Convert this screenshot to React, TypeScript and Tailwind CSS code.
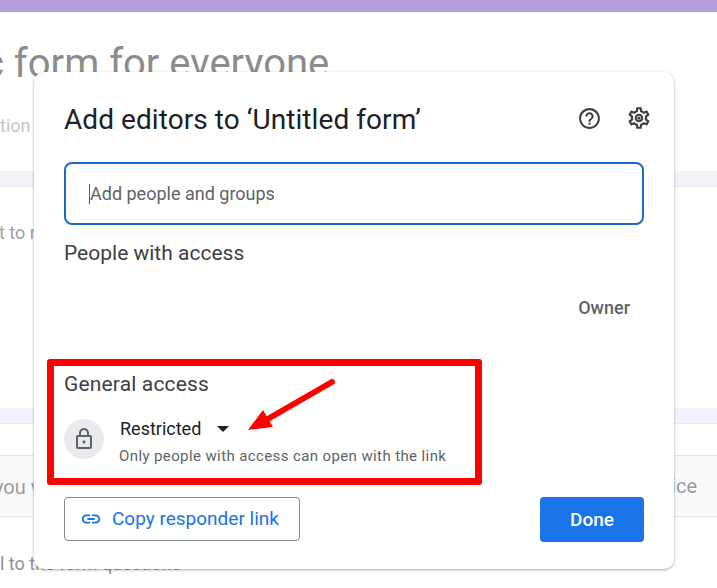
import React from 'react';

const Icon = ({ d, className }: { d: string; className: string }) => (
  <svg viewBox="0 0 24 24" fill="currentColor" className={className}>
    <path d={d} />
  </svg>
);

const helpPath =
  'M11 18h2v-2h-2v2zm1-16C6.48 2 2 6.48 2 12s4.48 10 10 10 10-4.48 10-10S17.52 2 12 2zm0 18c-4.41 0-8-3.59-8-8s3.59-8 8-8 8 3.59 8 8-3.59 8-8 8zm0-14c-2.21 0-4 1.79-4 4h2c0-1.1.9-2 2-2s2 .9 2 2c0 2-3 1.75-3 5h2c0-2.25 3-2.5 3-5 0-2.21-1.79-4-4-4z';
const settingsPath =
  'M19.43 12.98c.04-.32.07-.64.07-.98 0-.34-.03-.66-.07-.98l2.11-1.65c.19-.15.24-.42.12-.64l-2-3.46c-.09-.16-.26-.25-.44-.25-.06 0-.12.01-.17.03l-2.49 1c-.52-.4-1.08-.73-1.69-.98l-.38-2.65C14.46 2.18 14.25 2 14 2h-4c-.25 0-.46.18-.49.42l-.38 2.65c-.61.25-1.17.59-1.69.98l-2.49-1c-.06-.02-.12-.03-.18-.03-.17 0-.34.09-.43.25l-2 3.46c-.13.22-.07.49.12.64l2.11 1.65c-.04.32-.07.65-.07.98 0 .33.03.66.07.98l-2.11 1.65c-.19.15-.24.42-.12.64l2 3.46c.09.16.26.25.44.25.06 0 .12-.01.17-.03l2.49-1c.52.4 1.08.73 1.69.98l.38 2.65c.03.24.24.42.49.42h4c.25 0 .46-.18.49-.42l.38-2.65c.61-.25 1.17-.59 1.69-.98l2.49 1c.06.02.12.03.18.03.17 0 .34-.09.43-.25l2-3.46c.12-.22.07-.49-.12-.64l-2.11-1.65zm-1.98-1.71c.04.31.05.52.05.73 0 .21-.02.43-.05.73l-.14 1.13.89.7 1.08.84-.7 1.21-1.27-.51-1.04-.42-.9.68c-.43.32-.84.56-1.25.73l-1.06.43-.16 1.13-.2 1.35h-1.4l-.19-1.35-.16-1.13-1.06-.43c-.43-.18-.83-.41-1.23-.71l-.91-.7-1.06.43-1.27.51-.7-1.21 1.08-.84.89-.7-.14-1.13c-.03-.31-.05-.54-.05-.74s.02-.43.05-.73l.14-1.13-.89-.7-1.08-.84.7-1.21 1.27.51 1.04.42.9-.68c.43-.32.84-.56 1.25-.73l1.06-.43.16-1.13.2-1.35h1.39l.19 1.35.16 1.13 1.06.43c.43.18.83.41 1.23.71l.91.7 1.06-.43 1.27-.51.7 1.21-1.07.85-.89.7.14 1.13zM12 8c-2.21 0-4 1.79-4 4s1.79 4 4 4 4-1.79 4-4-1.79-4-4-4zm0 6c-1.1 0-2-.9-2-2s.9-2 2-2 2 .9 2 2-.9 2-2 2zM12 10.5a1.5 1.5 0 1 0 0 3 1.5 1.5 0 0 0 0-3z';
const lockPath =
  'M18 8h-1V6c0-2.76-2.24-5-5-5S7 3.24 7 6v2H6c-1.1 0-2 .9-2 2v10c0 1.1.9 2 2 2h12c1.1 0 2-.9 2-2V10c0-1.1-.9-2-2-2zM9 6c0-1.66 1.34-3 3-3s3 1.34 3 3v2H9V6zm9 14H6V10h12v10zm-6-3.5c.83 0 1.5-.67 1.5-1.5s-.67-1.5-1.5-1.5-1.5.67-1.5 1.5.67 1.5 1.5 1.5z';
const linkPath =
  'M3.9 12c0-1.71 1.39-3.1 3.1-3.1h4V7H7c-2.76 0-5 2.24-5 5s2.24 5 5 5h4v-1.9H7c-1.71 0-3.1-1.39-3.1-3.1zM8 13h8v-2H8v2zm9-6h-4v1.9h4c1.71 0 3.1 1.39 3.1 3.1s-1.39 3.1-3.1 3.1h-4V17h4c2.76 0 5-2.24 5-5s-2.24-5-5-5z';

function BackgroundPage() {
  return (
    <div className="flex flex-col h-full text-[#9a9a9a]">
      <div className="h-3 shrink-0 bg-[#b39ddb]" />
      <div className="h-[60px] shrink-0">
        <div className="mt-[29px] -ml-[17px] text-[40px] leading-[46px] text-[#8c8c8c] whitespace-nowrap">c form for everyone</div>
      </div>
      <div className="mt-[44px] text-[18px] leading-5 text-[#c4c4c4]">tion</div>
      <div className="mt-[35px] h-4 shrink-0 bg-[#f4f2f9] border-b border-[#e8e6ee]" />
      <div className="mt-[36px] text-[18px] leading-5 text-[#9f9f9f] -ml-[1px]">t to r</div>
      <div className="mt-[165px] h-4 shrink-0 bg-[#f4f2f9] border-b border-[#e8e6ee]" />
      <div className="mt-[31px] h-[62px] shrink-0 bg-[#fafafa] border-y border-[#e6e6e6] flex items-center justify-between">
        <span className="text-[20px] -ml-[6px] mt-[1px]">you v</span>
        <span className="text-[20px] pr-[20px]">ice</span>
      </div>
      <div className="mt-[37px] text-[18px] leading-5 text-[#8f8f8f] whitespace-nowrap">l to the form questions</div>
    </div>
  );
}

function ShareDialog() {
  return (
    <div className="absolute left-[34px] top-[72px] w-[640px] h-[497px] rounded-[10px] bg-white shadow-[0_1px_3px_rgba(60,64,67,0.45)] pt-[30px] px-[30px] flex flex-col">
      <div className="flex items-center justify-between h-9">
        <h1 className="text-[28px] leading-9 tracking-[0.07px] text-[#202124]">Add editors to ‘Untitled form’</h1>
        <div className="flex items-center gap-6 mr-[-8px] text-[#3c4043]">
          <Icon d={helpPath} className="w-[25px] h-[25px] -mt-[3px]" />
          <Icon d={settingsPath} className="w-[26px] h-[26px] -mt-[5px]" />
        </div>
      </div>

      <div className="mt-[24px] h-[63px] rounded-lg border-2 border-[#1a67d2] flex items-center pl-[23px]">
        <div className="w-px h-5 bg-[#1a67d2]" />
        <span className="text-[18px] text-[#5f6368]">Add people and groups</span>
      </div>

      <div className="mt-[16px] text-[21px] leading-6 text-[#3c4043]">People with access</div>

      <div className="mt-[31px] pr-[14px] text-right text-[18px] leading-6 font-medium text-[#5f6368]">Owner</div>

      <div className="mt-[52px] text-[21px] leading-6 tracking-[0.15px] text-[#3c4043]">General access</div>

      <div className="mt-[20px] flex items-start gap-[15px]">
        <div className="mt-[3px] w-10 h-10 rounded-full bg-[#e8eaed] flex items-center justify-center text-[#5f6368]">
          <Icon d={lockPath} className="w-6 h-6" />
        </div>
        <div>
          <div className="flex items-center h-6">
            <span className="text-[18px] font-[450] text-[#202124] pl-[1px]">Restricted</span>
            <span className="ml-[16px] mt-[1px] w-0 h-0 border-x-[6.5px] border-x-transparent border-t-[6px] border-t-[#202124]" />
          </div>
          <div className="mt-[6px] text-[15px] leading-5 tracking-[0.39px] text-[#5f6368]">Only people with access can open with the link</div>
        </div>
      </div>

      <div className="mt-[31px] flex items-start justify-between">
        <button className="h-11 w-[236px] rounded border border-[#80868b] flex items-center pl-[15px] gap-[10px] text-[#1a73e8]">
          <Icon d={linkPath} className="w-[22px] h-[22px]" />
          <span className="text-[19px] mt-[1px]">Copy responder link</span>
        </button>
        <button className="h-[45px] w-[104px] rounded bg-[#1a73e8] text-white text-[19px] font-medium pt-[1px]">Done</button>
      </div>
    </div>
  );
}

export default function App() {
  return (
    <div className="relative w-[717px] h-[588px] overflow-hidden bg-white font-['Roboto',sans-serif]">
      <BackgroundPage />
      <ShareDialog />

      {/* red annotation drawn over the screenshot */}
      <div className="absolute left-[47px] top-[359px] w-[435px] h-[126px] border-[7px] border-[#ff0000] rounded-[3px]" />
      <svg className="absolute left-[240px] top-[370px]" width="100" height="70" viewBox="240 370 100 70">
        <path d="M332 382 L266 420" stroke="#ff0000" strokeWidth="6" strokeLinecap="round" fill="none" />
        <path d="M248 430 L263 410 L273 427 Z" fill="#ff0000" />
      </svg>
    </div>
  );
}
